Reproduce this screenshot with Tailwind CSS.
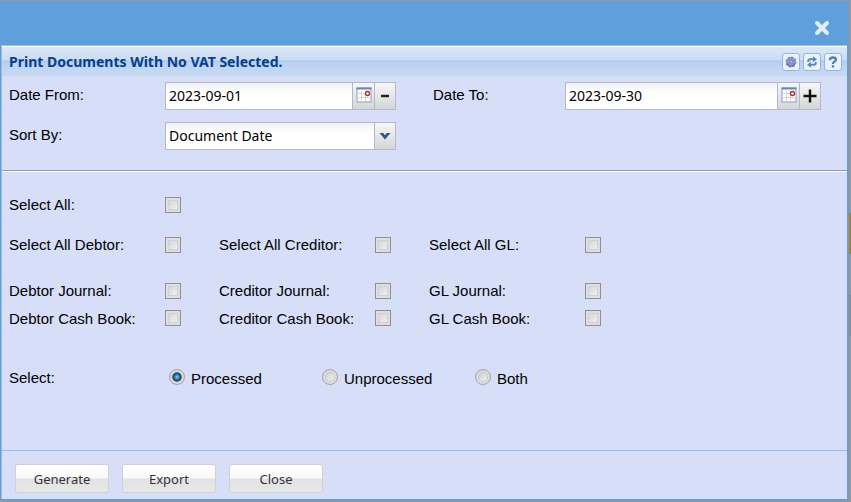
<!DOCTYPE html>
<html lang="en">
<head>
    <meta charset="UTF-8">
    <meta name="viewport" content="width=device-width, initial-scale=1.0">
    <title>Print Documents With No VAT Selected</title>
    <script src="https://cdn.jsdelivr.net/npm/@tailwindcss/browser@4"></script>
</head>
<body class="bg-[#999999] font-['Liberation_Sans',Arial,sans-serif] text-[15px] leading-5 text-black">
    <!-- Dialog window over the dimmed page -->
    <div class="min-h-screen flex flex-col pt-px pr-0.5 pb-px bg-[linear-gradient(#999_213px,#a87f2c_213px,#a87f2c_254px,#999_254px,#999_295px,#8d8d8d_295px,#8d8d8d_336px,#999_336px)]">
        <main class="grow flex flex-col bg-[#5f9fdc] pl-px pr-0.5 pb-0.5">
            <header class="h-11 flex items-center justify-end pr-[17px] pt-2.5">
                <button type="button" aria-label="Close window" class="block">
                    <svg class="size-4" viewBox="0 0 16 16" fill="none" stroke="#e2edf8" stroke-width="4" stroke-linecap="round"><path d="M3 3l10 10M13 3L3 13"/></svg>
                </button>
            </header>

            <section class="grow flex flex-col border-l border-t border-[#99bce8] bg-[#d6def8]">
                <!-- Title bar -->
                <div class="h-[30px] flex items-center justify-between border-t border-white bg-[linear-gradient(#dbe7f6,#cbdcf3_46%,#aecaef_47%,#aecaef_50%,#b9d0f0_51%,#c9dbf3)] pl-[7px] pr-[5px]">
                    <h1 class="font-['Noto_Sans',sans-serif] text-[14px] font-bold text-[#04408c]">Print Documents With No VAT Selected.</h1>
                    <div class="flex gap-[3px]">
                        <button type="button" aria-label="Settings" class="size-[18px] flex items-center justify-center rounded-[3px] border border-[#93b5e8] bg-[#eaf2fd]">
                            <svg class="size-3" viewBox="0 0 12 12"><circle cx="6" cy="6" r="4.9" fill="#8794cc" stroke="#7682b8" stroke-width="1.2" stroke-dasharray="2.2 1.6"/><circle cx="6" cy="6" r="4.6" fill="#8b97cf"/><path d="M2.2 7.5A4 4 0 0 0 9.8 7.5" fill="none" stroke="#6874ad" stroke-width="1.2"/><circle cx="6" cy="5.6" r="1.6" fill="#a9b5e2" stroke="#7380ba" stroke-width=".8"/></svg>
                        </button>
                        <button type="button" aria-label="Refresh" class="size-[18px] flex items-center justify-center rounded-[3px] border border-[#93b5e8] bg-[#eaf2fd]">
                            <svg class="size-3" viewBox="0 0 12 12" fill="none" stroke="#5489bd" stroke-width="1.9"><path d="M2.2 6V5q0-1.7 2-1.7h4M9.8 6v1q0 1.7-2 1.7h-4"/><path d="M7 .2L11 3.3 7 6.2zM5 5.8L1 8.7l4 3.1z" fill="#5489bd" stroke="none"/></svg>
                        </button>
                        <button type="button" aria-label="Help" class="size-[18px] flex items-center justify-center rounded-[3px] border border-[#93b5e8] bg-[#eaf2fd]">
                            <svg class="size-3" viewBox="0 0 12 12" fill="none" stroke="#4d80b5" stroke-width="2.3"><path d="M3 4.2V3.3Q3.3 1.5 6 1.5t3 2q0 1.3-1.5 2T6 8"/><path d="M6 9.2v2.3"/></svg>
                        </button>
                    </div>
                </div>

                <form id="printForm" class="grow flex flex-col">
                    <!-- Dates and sorting -->
                    <div class="grid grid-cols-[156px_268px_132px_1fr] gap-y-3 pl-[7px] pt-1.5 pb-5">
                        <label for="dateFrom" class="pt-[3px]">Date From:</label>
                        <div class="w-[231px] h-7 flex border border-[#b5b8c8] bg-white">
                            <input id="dateFrom" type="text" value="2023-09-01" class="grow min-w-0 px-[3px] bg-linear-to-b from-[#f2f2f2] to-white to-40% font-['Noto_Sans',sans-serif] text-[14px] outline-none">
                            <button type="button" aria-label="Pick from date" class="shrink-0 w-[22px] flex justify-center pt-1 border-l border-[#b5b8c8] bg-linear-to-b from-[#f7f7f7] to-[#d5d5d5]">
                                <svg class="size-4" viewBox="0 0 16 16"><rect x="1" y="1" width="14" height="14" fill="#fff" stroke="#819fc9"/><path d="M.5 1.5h15" stroke="#6488bd" stroke-width="2"/><path d="M2 6.5h12M2 10.5h12M5.5 4v10M9.5 4v10" stroke="#d4d4d4"/><circle cx="11.5" cy="6.5" r="2" fill="#fff" stroke="#a52b2b" stroke-width="1.3"/></svg>
                            </button>
                            <button type="button" aria-label="Previous month" class="shrink-0 w-[21px] flex items-center justify-center border-l border-[#b5b8c8] bg-linear-to-b from-[#f7f7f7] to-[#d5d5d5]">
                                <svg class="size-4" viewBox="0 0 16 16"><path d="M4 8h8" stroke="#222" stroke-width="2.5"/></svg>
                            </button>
                        </div>
                        <label for="dateTo" class="pt-[3px]">Date To:</label>
                        <div class="w-64 h-7 flex border border-[#b5b8c8] bg-white">
                            <input id="dateTo" type="text" value="2023-09-30" class="grow min-w-0 px-[3px] bg-linear-to-b from-[#f2f2f2] to-white to-40% font-['Noto_Sans',sans-serif] text-[14px] outline-none">
                            <button type="button" aria-label="Pick to date" class="shrink-0 w-[22px] flex justify-center pt-1 border-l border-[#b5b8c8] bg-linear-to-b from-[#f7f7f7] to-[#d5d5d5]">
                                <svg class="size-4" viewBox="0 0 16 16"><rect x="1" y="1" width="14" height="14" fill="#fff" stroke="#819fc9"/><path d="M.5 1.5h15" stroke="#6488bd" stroke-width="2"/><path d="M2 6.5h12M2 10.5h12M5.5 4v10M9.5 4v10" stroke="#d4d4d4"/><circle cx="11.5" cy="6.5" r="2" fill="#fff" stroke="#a52b2b" stroke-width="1.3"/></svg>
                            </button>
                            <button type="button" aria-label="Next month" class="shrink-0 w-[21px] flex items-center justify-center border-l border-[#b5b8c8] bg-linear-to-b from-[#f7f7f7] to-[#d5d5d5]">
                                <svg class="size-4" viewBox="0 0 16 16"><path d="M1.5 8h13M8 1.5v13" stroke="#111" stroke-width="2.4"/></svg>
                            </button>
                        </div>
                        <label for="sortBy" class="pt-[3px]">Sort By:</label>
                        <div class="w-[231px] h-7 grid border border-[#b5b8c8] bg-white">
                            <select id="sortBy" class="col-start-1 row-start-1 appearance-none px-[3px] bg-linear-to-b from-[#f2f2f2] to-white to-40% font-['Noto_Sans',sans-serif] text-[14px] outline-none">
                                <option>Document Date</option>
                            </select>
                            <span class="col-start-1 row-start-1 justify-self-end w-[21px] flex items-center justify-center border-l border-[#b5b8c8] bg-linear-to-b from-[#f7f7f7] to-[#d5d5d5] pointer-events-none">
                                <svg class="w-3 h-2" viewBox="0 0 12 8"><path d="M.5 1h3.7L6 3.2 7.8 1h3.7L6 7.4z" fill="#32528f"/></svg>
                            </span>
                        </div>
                    </div>

                    <hr class="h-0.5 border-t border-b border-t-[#999] border-b-white">

                    <!-- Document types -->
                    <div class="grid grid-cols-[156px_54px_156px_54px_156px_1fr] grid-rows-[40px_46px_28px_20px] items-start pl-[7px] pt-[23px]">
                        <label for="all">Select All:</label>
                        <input id="all" type="checkbox" class="appearance-none size-4 mt-0.5 border border-[#909090] bg-linear-to-br from-[#cbccd3] to-[#fafafa] shadow-[inset_0_0_0_2px_#dedede,inset_0_0_0_3px_#cfd0d5]">
                        <label for="allDebtor" class="col-start-1">Select All Debtor:</label>
                        <input id="allDebtor" type="checkbox" class="appearance-none size-4 mt-0.5 border border-[#909090] bg-linear-to-br from-[#cbccd3] to-[#fafafa] shadow-[inset_0_0_0_2px_#dedede,inset_0_0_0_3px_#cfd0d5]">
                        <label for="allCreditor">Select All Creditor:</label>
                        <input id="allCreditor" type="checkbox" class="appearance-none size-4 mt-0.5 border border-[#909090] bg-linear-to-br from-[#cbccd3] to-[#fafafa] shadow-[inset_0_0_0_2px_#dedede,inset_0_0_0_3px_#cfd0d5]">
                        <label for="allGl">Select All GL:</label>
                        <input id="allGl" type="checkbox" class="appearance-none size-4 mt-0.5 border border-[#909090] bg-linear-to-br from-[#cbccd3] to-[#fafafa] shadow-[inset_0_0_0_2px_#dedede,inset_0_0_0_3px_#cfd0d5]">
                        <label for="debtorJournal">Debtor Journal:</label>
                        <input id="debtorJournal" type="checkbox" class="appearance-none size-4 mt-0.5 border border-[#909090] bg-linear-to-br from-[#cbccd3] to-[#fafafa] shadow-[inset_0_0_0_2px_#dedede,inset_0_0_0_3px_#cfd0d5]">
                        <label for="creditorJournal">Creditor Journal:</label>
                        <input id="creditorJournal" type="checkbox" class="appearance-none size-4 mt-0.5 border border-[#909090] bg-linear-to-br from-[#cbccd3] to-[#fafafa] shadow-[inset_0_0_0_2px_#dedede,inset_0_0_0_3px_#cfd0d5]">
                        <label for="glJournal">GL Journal:</label>
                        <input id="glJournal" type="checkbox" class="appearance-none size-4 mt-0.5 border border-[#909090] bg-linear-to-br from-[#cbccd3] to-[#fafafa] shadow-[inset_0_0_0_2px_#dedede,inset_0_0_0_3px_#cfd0d5]">
                        <label for="debtorCash">Debtor Cash Book:</label>
                        <input id="debtorCash" type="checkbox" class="appearance-none size-4 mt-px border border-[#909090] bg-linear-to-br from-[#cbccd3] to-[#fafafa] shadow-[inset_0_0_0_2px_#dedede,inset_0_0_0_3px_#cfd0d5]">
                        <label for="creditorCash">Creditor Cash Book:</label>
                        <input id="creditorCash" type="checkbox" class="appearance-none size-4 mt-px border border-[#909090] bg-linear-to-br from-[#cbccd3] to-[#fafafa] shadow-[inset_0_0_0_2px_#dedede,inset_0_0_0_3px_#cfd0d5]">
                        <label for="glCash">GL Cash Book:</label>
                        <input id="glCash" type="checkbox" class="appearance-none size-4 mt-px border border-[#909090] bg-linear-to-br from-[#cbccd3] to-[#fafafa] shadow-[inset_0_0_0_2px_#dedede,inset_0_0_0_3px_#cfd0d5]">
                    </div>

                    <!-- Processing status -->
                    <fieldset class="flex pl-[7px] pt-[39px]">
                        <legend class="float-left w-40">Select:</legend>
                        <label class="w-[153px] flex items-start gap-1.5 pt-px">
                            <input type="radio" name="status" checked class="appearance-none size-4 rounded-full border border-[#a5a5a5] bg-[radial-gradient(circle_closest-side,#8fd0ee,#2d7ba6_35%,#123a58_60%,#d8d8d8_72%)]">
                            Processed
                        </label>
                        <label class="w-[153px] flex items-start gap-1.5 pt-px">
                            <input type="radio" name="status" class="appearance-none size-4 rounded-full border border-[#a5a5a5] bg-linear-to-br from-[#c3c8cc] to-[#fafafa] shadow-[inset_0_0_0_2px_#dedede,inset_0_0_0_3px_#c6c8ca]">
                            Unprocessed
                        </label>
                        <label class="flex items-start gap-1.5 pt-px">
                            <input type="radio" name="status" class="appearance-none size-4 rounded-full border border-[#a5a5a5] bg-linear-to-br from-[#c3c8cc] to-[#fafafa] shadow-[inset_0_0_0_2px_#dedede,inset_0_0_0_3px_#c6c8ca]">
                            Both
                        </label>
                    </fieldset>
                </form>

                <!-- Actions -->
                <footer class="flex gap-[13px] border-t border-[#99bce8] pl-[13px] pt-[13px] pb-1.5 font-['Noto_Sans',sans-serif] text-[13px] text-[#333]">
                    <button type="submit" form="printForm" class="w-[94px] h-[29px] rounded-[3px] border border-[#d1d1d1] bg-[linear-gradient(#fff,#f9f9f9_48%,#e2e2e2_52%,#e7e7e7)]">Generate</button>
                    <button type="button" class="w-[94px] h-[29px] rounded-[3px] border border-[#d1d1d1] bg-[linear-gradient(#fff,#f9f9f9_48%,#e2e2e2_52%,#e7e7e7)]">Export</button>
                    <button type="button" class="w-[94px] h-[29px] rounded-[3px] border border-[#d1d1d1] bg-[linear-gradient(#fff,#f9f9f9_48%,#e2e2e2_52%,#e7e7e7)]">Close</button>
                </footer>
            </section>
        </main>
    </div>
</body>
</html>
